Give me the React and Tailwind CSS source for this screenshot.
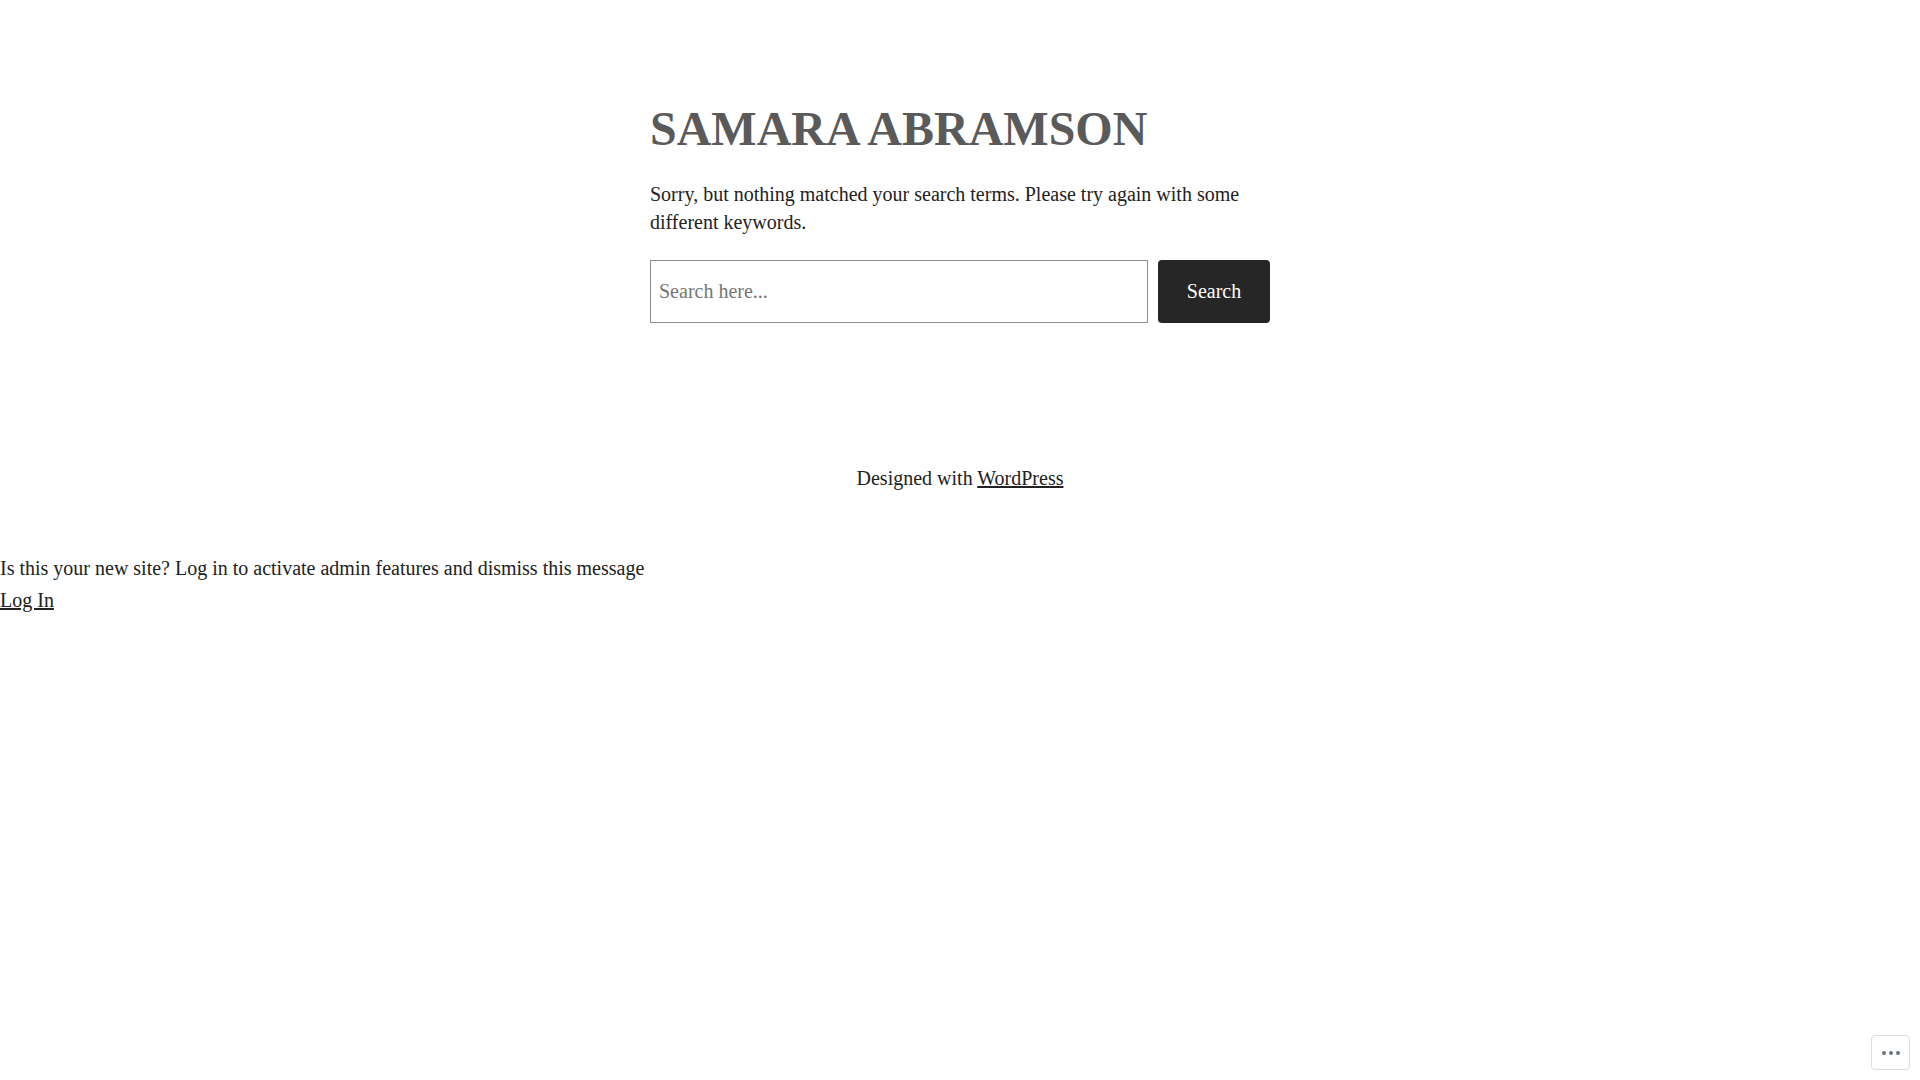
const serif = "font-['Liberation_Serif',serif]";

export default function App() {
  return (
    <div className={`min-h-screen bg-white text-[20px] text-[#222222] ${serif}`}>
      <main className="mx-auto w-[620px] pt-[96px]">
        <h1 className="text-[48px] leading-[66px] font-bold uppercase text-[#5a5a5a]">Samara Abramson</h1>
        <p className="mt-[18px] leading-[28px]">
          Sorry, but nothing matched your search terms. Please try again with some different keywords.
        </p>
        <form className="mt-[24px] flex gap-[10px]">
          <input
            type="search"
            placeholder="Search here..."
            className="h-[63px] w-[498px] border border-[#8f8f8f] px-2 text-[20px] outline-none placeholder:text-[#767676]"
          />
          <button type="button" className="h-[63px] flex-1 rounded-[4px] bg-[#262626] pb-[1px] text-white">
            Search
          </button>
        </form>
      </main>
      <footer className="mt-[139px] text-center leading-[32px]">
        Designed with <a href="#" className="underline">WordPress</a>
      </footer>
      <div className="mt-[58px] leading-[32px]">
        <p>Is this your new site? Log in to activate admin features and dismiss this message</p>
        <a href="#" className="underline">Log In</a>
      </div>
      <div className="fixed right-[10px] bottom-[10px] flex h-[35px] w-[39px] items-center justify-center gap-[3px] rounded-[4px] border border-[#dcdcdc] bg-white pt-[1px]">
        <span className="size-[4px] rounded-full bg-[#6b7280]" />
        <span className="size-[4px] rounded-full bg-[#6b7280]" />
        <span className="size-[4px] rounded-full bg-[#6b7280]" />
      </div>
    </div>
  );
}
